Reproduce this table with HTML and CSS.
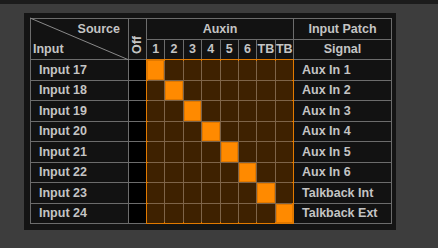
FILE: index.html
```html
<!DOCTYPE html>
<html>
<head>
<meta charset="utf-8">
<link rel="stylesheet" href="styles.css">
</head>
<body>
<div class="topbar"></div>
<div class="stage">
  <div class="panel">
    <div class="grid">
      <div class="cell corner">
        <svg class="diag" viewBox="0 0 100 100" preserveAspectRatio="none"><line x1="0" y1="0" x2="100" y2="100" vector-effect="non-scaling-stroke"/></svg>
        <span class="src">Source</span>
        <span class="inp">Input</span>
      </div>
      <div class="cell offhead"><span class="offtxt">Off</span></div>
      <div class="cell head auxin">Auxin</div>
      <div class="cell head patch">Input Patch</div>
      <div class="cell head num">1</div>
      <div class="cell head num">2</div>
      <div class="cell head num">3</div>
      <div class="cell head num">4</div>
      <div class="cell head num">5</div>
      <div class="cell head num">6</div>
      <div class="cell head num">TB</div>
      <div class="cell head num">TB</div>
      <div class="cell head">Signal</div>

      <div class="cell label r1">Input 17</div><div class="cell off r1"></div><div class="cell label sig r1">Aux In 1</div>
      <div class="cell label r2">Input 18</div><div class="cell off r2"></div><div class="cell label sig r2">Aux In 2</div>
      <div class="cell label r3">Input 19</div><div class="cell off r3"></div><div class="cell label sig r3">Aux In 3</div>
      <div class="cell label r4">Input 20</div><div class="cell off r4"></div><div class="cell label sig r4">Aux In 4</div>
      <div class="cell label r5">Input 21</div><div class="cell off r5"></div><div class="cell label sig r5">Aux In 5</div>
      <div class="cell label r6">Input 22</div><div class="cell off r6"></div><div class="cell label sig r6">Aux In 6</div>
      <div class="cell label r7">Input 23</div><div class="cell off r7"></div><div class="cell label sig r7">Talkback Int</div>
      <div class="cell label r8">Input 24</div><div class="cell off r8"></div><div class="cell label sig r8">Talkback Ext</div>

      <div class="matrix">
        <div class="m on"></div><div class="m"></div><div class="m"></div><div class="m"></div><div class="m"></div><div class="m"></div><div class="m"></div><div class="m"></div>
        <div class="m"></div><div class="m on"></div><div class="m"></div><div class="m"></div><div class="m"></div><div class="m"></div><div class="m"></div><div class="m"></div>
        <div class="m"></div><div class="m"></div><div class="m on"></div><div class="m"></div><div class="m"></div><div class="m"></div><div class="m"></div><div class="m"></div>
        <div class="m"></div><div class="m"></div><div class="m"></div><div class="m on"></div><div class="m"></div><div class="m"></div><div class="m"></div><div class="m"></div>
        <div class="m"></div><div class="m"></div><div class="m"></div><div class="m"></div><div class="m on"></div><div class="m"></div><div class="m"></div><div class="m"></div>
        <div class="m"></div><div class="m"></div><div class="m"></div><div class="m"></div><div class="m"></div><div class="m on"></div><div class="m"></div><div class="m"></div>
        <div class="m"></div><div class="m"></div><div class="m"></div><div class="m"></div><div class="m"></div><div class="m"></div><div class="m on"></div><div class="m"></div>
        <div class="m"></div><div class="m"></div><div class="m"></div><div class="m"></div><div class="m"></div><div class="m"></div><div class="m"></div><div class="m on"></div>
      </div>
    </div>
  </div>
</div>
</body>
</html>
```
FILE: styles.css
```css
html, body {
  margin: 0;
  padding: 0;
  background: #3d3d3d;
  width: 438px;
  height: 248px;
  overflow: hidden;
  font-family: "Liberation Sans", Arial, sans-serif;
  font-weight: bold;
  font-size: 12.5px;
  color: #c4c4c4;
}

.topbar {
  height: 4px;
  background: #1c1c1c;
}

.stage {
  padding: 9px 0 0 24px;
}

.panel {
  width: 372px;
  height: 217px;
  box-sizing: border-box;
  background: #141414;
  padding: 5px 0 0 6px;
}

.grid {
  width: 362px;
  height: 206px;
  box-sizing: border-box;
  padding: 1px;
  gap: 1px;
  background: #6c6c6c;
  display: grid;
  grid-template-columns: 97px 17px repeat(8, 1fr) 97px;
  grid-template-rows: repeat(10, 1fr);
}

.cell {
  background: #121212;
  display: flex;
  align-items: center;
  justify-content: center;
  white-space: nowrap;
  min-width: 0;
}

.corner {
  grid-column: 1;
  grid-row: 1 / 3;
  position: relative;
  display: block;
}

.diag {
  position: absolute;
  left: -1px;
  top: -1px;
  width: calc(100% + 2px);
  height: calc(100% + 2px);
  overflow: visible;
}

.diag line {
  stroke: #8a8a8a;
  stroke-width: 1;
}

.src {
  position: absolute;
  right: 8px;
  top: 3px;
}

.inp {
  position: absolute;
  left: 2px;
  top: 23px;
}

.offhead {
  grid-column: 2;
  grid-row: 1 / 3;
  align-items: flex-end;
  padding-bottom: 5px;
  box-sizing: border-box;
}

.offtxt {
  writing-mode: vertical-rl;
  transform: rotate(180deg);
  line-height: 17px;
}

.auxin {
  grid-column: 3 / 11;
  grid-row: 1;
}

.patch {
  grid-column: 11;
  grid-row: 1;
}

.num {
  overflow: visible;
}

.label {
  grid-column: 1;
  justify-content: flex-start;
  padding-left: 8px;
}

.sig {
  grid-column: 11;
}

.off {
  grid-column: 2;
  background: #000;
}

.r1 { grid-row: 3; }
.r2 { grid-row: 4; }
.r3 { grid-row: 5; }
.r4 { grid-row: 6; }
.r5 { grid-row: 7; }
.r6 { grid-row: 8; }
.r7 { grid-row: 9; }
.r8 { grid-row: 10; }

.matrix {
  grid-column: 3 / 11;
  grid-row: 3 / 11;
  display: grid;
  grid-template-columns: repeat(8, 1fr);
  grid-template-rows: repeat(8, 1fr);
  gap: 1px;
  background: #7e6448;
  outline: 1px solid #e27a00;
  box-shadow: inset 0 0 0 1px #e27a00;
}

.m {
  background: #3e2100;
}

.m.on {
  background: #ff8a00;
  box-shadow: inset 0 0 0 1px #e07800;
}
```
